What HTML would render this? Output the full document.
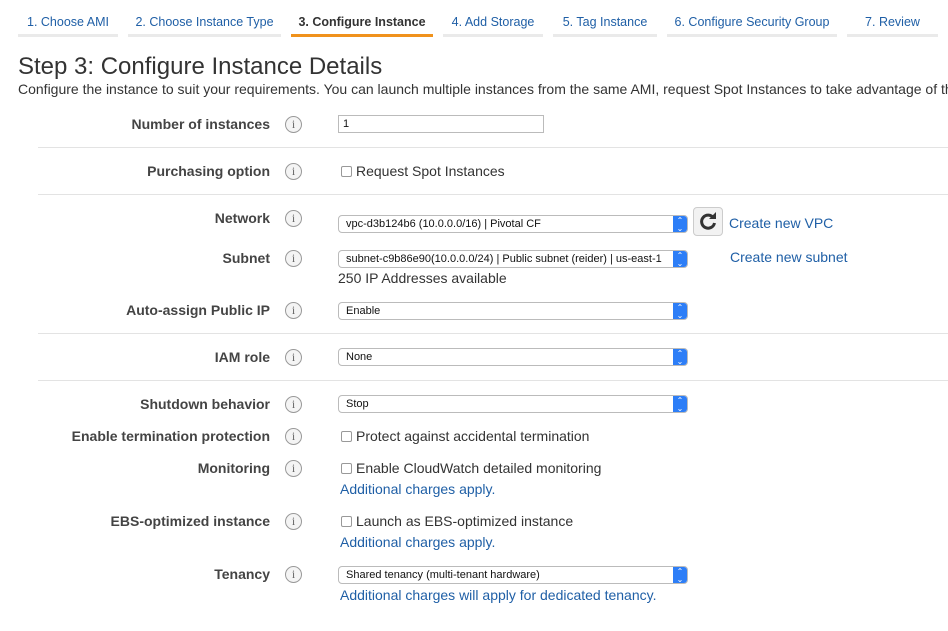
<!DOCTYPE html>
<html><head><meta charset="utf-8"><style>
*{margin:0;padding:0;box-sizing:border-box}
html,body{width:948px;height:631px;overflow:hidden}
body{background:#fff;font-family:"Liberation Sans",Arial,sans-serif;color:#333;position:relative}
.a{position:absolute;white-space:nowrap}
.tab{position:absolute;top:8px;height:29px;border-bottom:3px solid #eaeaea;color:#1f5fa6;font-size:12.5px;line-height:28px;text-align:center}
.tab.on{border-bottom-color:#f0921c;color:#333;font-weight:bold}
.lbl{position:absolute;right:678px;font-weight:bold;font-size:14px;color:#444;line-height:16px;white-space:nowrap}
.i{position:absolute;left:285px;width:17px;height:17px;border:1px solid #999;border-radius:50%;background:#f4f4f4;color:#666;font-size:12px;line-height:15px;text-align:center;font-family:"Liberation Serif",serif}
.sep{position:absolute;left:38px;width:910px;height:1px;background:#e3e3e3}
.sel{position:absolute;left:338px;width:350px;height:18px;border:1px solid #bbb;border-radius:4px;background:#fff;font-size:11px;line-height:16px;padding-left:7px;color:#111;overflow:hidden}
.sel:after{content:"";position:absolute;right:-1px;top:-1px;width:15px;height:18px;background:#2d7ef7;border-radius:0 4px 4px 0}
.sel i{position:absolute;right:3px;top:0;color:#fff;font-style:normal;font-size:8px;line-height:8px;z-index:2;text-align:center;width:8px;padding-top:1px}
.t{position:absolute;font-size:14px;line-height:16px;color:#333;white-space:nowrap}
.cb{display:inline-block;width:11px;height:11px;border:1px solid #999;border-radius:2px;vertical-align:-1px;margin-right:4px;background:#fff}
.lk{position:absolute;left:340px;font-size:14px;line-height:16px;color:#1f5fa6;white-space:nowrap}
</style></head><body>
<div class="tab" style="left:18px;width:100px">1. Choose AMI</div>
<div class="tab" style="left:128px;width:153px">2. Choose Instance Type</div>
<div class="tab on" style="left:291px;width:142px">3. Configure Instance</div>
<div class="tab" style="left:443px;width:100px">4. Add Storage</div>
<div class="tab" style="left:553px;width:104px">5. Tag Instance</div>
<div class="tab" style="left:667px;width:170px">6. Configure Security Group</div>
<div class="tab" style="left:847px;width:91px">7. Review</div>

<div class="a" style="left:18px;top:53px;font-size:24px;line-height:28px;color:#333">Step 3: Configure Instance Details</div>
<div class="a" style="left:18px;top:81px;width:930px;overflow:hidden;font-size:14px;line-height:16px;color:#333">Configure the instance to suit your requirements. You can launch multiple instances from the same AMI, request Spot Instances to take advantage of the lower pricing</div>

<div class="lbl" style="top:116px">Number of instances</div><div class="i" style="top:116px">i</div>
<div class="a" style="left:338px;top:115px;width:206px;height:18px;border:1px solid #bbb;font-size:11px;line-height:16px;padding-left:4px;color:#111">1</div>
<div class="sep" style="top:147px"></div>

<div class="lbl" style="top:163px">Purchasing option</div><div class="i" style="top:163px">i</div>
<div class="t" style="left:341px;top:163px"><span class="cb"></span>Request Spot Instances</div>
<div class="sep" style="top:194px"></div>

<div class="lbl" style="top:210px">Network</div><div class="i" style="top:210px">i</div>
<div class="sel" style="top:215px">vpc-d3b124b6 (10.0.0.0/16) | Pivotal CF<i>⌃<br>⌄</i></div>
<div class="a" style="left:693px;top:207px;width:30px;height:29px;border:1px solid #ccc;border-radius:4px;background:#f2f2f2"><svg width="28" height="27" viewBox="0 0 28 27"><path d="M19.5 10A6.5 6.5 0 1 0 20.5 15" fill="none" stroke="#333" stroke-width="3"/><path d="M15 11h7V4z" fill="#333"/></svg></div>
<div class="a" style="left:729px;top:215px;font-size:14px;line-height:16px;color:#1f5fa6">Create new VPC</div>

<div class="lbl" style="top:250px">Subnet</div><div class="i" style="top:250px">i</div>
<div class="sel" style="top:250px">subnet-c9b86e90(10.0.0.0/24) | Public subnet (reider) | us-east-1<i>⌃<br>⌄</i></div>
<div class="a" style="left:730px;top:249px;font-size:14px;line-height:16px;color:#1f5fa6">Create new subnet</div>
<div class="t" style="left:338px;top:270px">250 IP Addresses available</div>

<div class="lbl" style="top:302px">Auto-assign Public IP</div><div class="i" style="top:302px">i</div>
<div class="sel" style="top:302px">Enable<i>⌃<br>⌄</i></div>
<div class="sep" style="top:333px"></div>

<div class="lbl" style="top:349px">IAM role</div><div class="i" style="top:349px">i</div>
<div class="sel" style="top:348px">None<i>⌃<br>⌄</i></div>
<div class="sep" style="top:380px"></div>

<div class="lbl" style="top:396px">Shutdown behavior</div><div class="i" style="top:396px">i</div>
<div class="sel" style="top:395px">Stop<i>⌃<br>⌄</i></div>

<div class="lbl" style="top:428px">Enable termination protection</div><div class="i" style="top:428px">i</div>
<div class="t" style="left:341px;top:428px"><span class="cb"></span>Protect against accidental termination</div>

<div class="lbl" style="top:460px">Monitoring</div><div class="i" style="top:460px">i</div>
<div class="t" style="left:341px;top:460px"><span class="cb"></span>Enable CloudWatch detailed monitoring</div>
<div class="lk" style="top:481px">Additional charges apply.</div>

<div class="lbl" style="top:513px">EBS-optimized instance</div><div class="i" style="top:513px">i</div>
<div class="t" style="left:341px;top:513px"><span class="cb"></span>Launch as EBS-optimized instance</div>
<div class="lk" style="top:534px">Additional charges apply.</div>

<div class="lbl" style="top:566px">Tenancy</div><div class="i" style="top:566px">i</div>
<div class="sel" style="top:566px">Shared tenancy (multi-tenant hardware)<i>⌃<br>⌄</i></div>
<div class="lk" style="top:587px">Additional charges will apply for dedicated tenancy.</div>
</body></html>
